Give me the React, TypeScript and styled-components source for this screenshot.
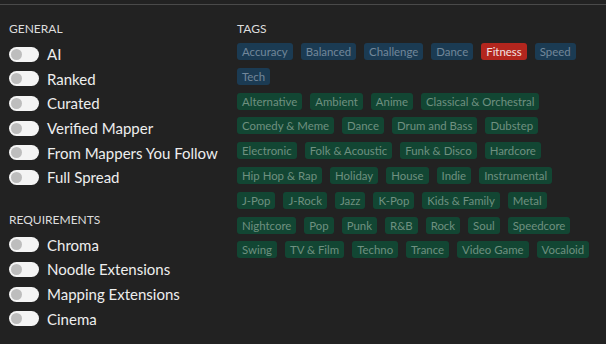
import React from "react";
import styled, { createGlobalStyle } from "styled-components";

const GlobalStyle = createGlobalStyle`
  html, body {
    margin: 0;
    padding: 0;
    background: #222222;
  }
  body {
    font-family: Lato, "Noto Sans", sans-serif;
    color: #eeeeee;
  }
`;

const Panel = styled.div`
  margin-top: 4px;
  border-top: 1px solid #4a4a4a;
  height: 339px;
  box-sizing: border-box;
  padding: 16px 15px 0 9px;
  display: flex;
`;

const LeftColumn = styled.div`
  width: 228px;
  flex-shrink: 0;
  display: flex;
  flex-direction: column;
`;

const RightColumn = styled.div`
  flex: 1;
  display: flex;
  flex-direction: column;
`;

const Heading = styled.div<{ $top?: number }>`
  font-size: 12px;
  line-height: 16px;
  text-transform: uppercase;
  color: #dddddd;
  margin-top: ${(p) => p.$top ?? 0}px;
  margin-bottom: 5px;
`;

const ToggleRow = styled.label`
  display: flex;
  align-items: center;
  gap: 8px;
  height: 24.6px;
  font-size: 15px;
  color: #eeeeee;
`;

const Switch = styled.span`
  width: 30px;
  height: 15px;
  border-radius: 8px;
  background: #f4f4f4;
  display: flex;
  align-items: center;
  padding: 0 2px;
  box-sizing: border-box;
  flex-shrink: 0;
  &::before {
    content: "";
    width: 11px;
    height: 11px;
    border-radius: 50%;
    background: #bdbdbd;
  }
`;

const TagList = styled.div`
  display: flex;
  flex-direction: column;
  gap: 7.8px;
  margin-top: 1px;
`;

const TagGroup = styled.div`
  display: flex;
  flex-wrap: wrap;
  row-gap: 7.8px;
  column-gap: 8px;
`;

const tagColors = {
  blue: { bg: "#1b3b53", fg: "#72879a" },
  green: { bg: "#124633", fg: "#6f9080" },
  red: { bg: "#b3261e", fg: "#f3e3e2" },
};

const Tag = styled.span<{ $kind: "blue" | "green" | "red" }>`
  height: 17px;
  line-height: 17px;
  padding: 0 5px;
  border-radius: 3px;
  font-size: 11.4px;
  background: ${(p) => tagColors[p.$kind].bg};
  color: ${(p) => tagColors[p.$kind].fg};
`;

const general = ["AI", "Ranked", "Curated", "Verified Mapper", "From Mappers You Follow", "Full Spread"];
const requirements = ["Chroma", "Noodle Extensions", "Mapping Extensions", "Cinema"];

const styleTags = ["Accuracy", "Balanced", "Challenge", "Dance", "Fitness", "Speed", "Tech"];
const genreTags = [
  "Alternative", "Ambient", "Anime", "Classical & Orchestral",
  "Comedy & Meme", "Dance", "Drum and Bass", "Dubstep",
  "Electronic", "Folk & Acoustic", "Funk & Disco", "Hardcore",
  "Hip Hop & Rap", "Holiday", "House", "Indie", "Instrumental",
  "J-Pop", "J-Rock", "Jazz", "K-Pop", "Kids & Family", "Metal",
  "Nightcore", "Pop", "Punk", "R&B", "Rock", "Soul", "Speedcore",
  "Swing", "TV & Film", "Techno", "Trance", "Video Game", "Vocaloid",
];

const App: React.FC = () => {
  return (
    <>
      <GlobalStyle />
      <Panel>
        <LeftColumn>
          <Heading>General</Heading>
          {general.map((g) => (
            <ToggleRow key={g}>
              <Switch />
              {g}
            </ToggleRow>
          ))}
          <Heading $top={22}>Requirements</Heading>
          {requirements.map((r) => (
            <ToggleRow key={r}>
              <Switch />
              {r}
            </ToggleRow>
          ))}
        </LeftColumn>
        <RightColumn>
          <Heading>Tags</Heading>
          <TagList>
            <TagGroup>
              {styleTags.map((t) => (
                <Tag key={t} $kind={t === "Fitness" ? "red" : "blue"}>
                  {t}
                </Tag>
              ))}
            </TagGroup>
            <TagGroup>
              {genreTags.map((t) => (
                <Tag key={t} $kind="green">
                  {t}
                </Tag>
              ))}
            </TagGroup>
          </TagList>
        </RightColumn>
      </Panel>
    </>
  );
};

export default App;
